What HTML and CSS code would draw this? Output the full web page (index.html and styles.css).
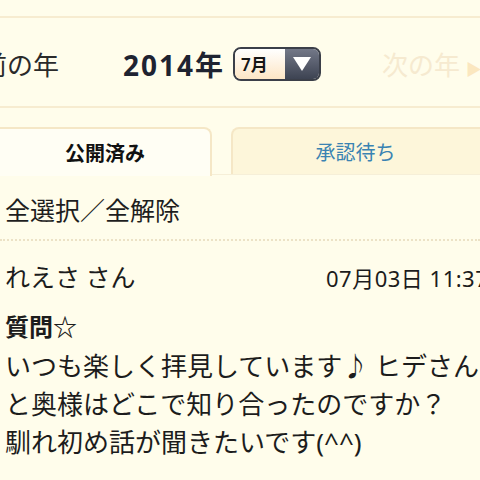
FILE: index.html
```html
<!DOCTYPE html>
<html lang="ja">
<head>
<meta charset="utf-8">
<link rel="stylesheet" href="styles.css">
</head>
<body>
<div class="page">
  <div class="topbar"></div>
  <div class="yearnav">
    <span class="prev">前の年</span>
    <span class="year">2014年</span>
    <span class="select"><span class="sel-val">7月</span><span class="sel-btn"><svg width="20" height="16" viewBox="0 0 20 16"><path d="M1 1 H19 L10 15 Z" fill="#fff"/></svg></span></span>
    <span class="next">次の年 <span class="arrow">▶</span></span>
  </div>
  <div class="tabs">
    <div class="tab active">公開済み</div>
    <div class="tab pending">承認待ち</div>
  </div>
  <div class="content">
    <div class="selectall">全選択／全解除</div>
    <div class="entry">
      <div class="meta"><span class="name">れえさ さん</span><span class="date">07月03日 11:37</span></div>
      <div class="title">質問☆</div>
      <div class="body">いつも楽しく拝見しています♪ ヒデさん<br>と奥様はどこで知り合ったのですか？<br>馴れ初め話が聞きたいです(^^)</div>
    </div>
  </div>
</div>
</body>
</html>
```

FILE: styles.css
```css
* { box-sizing: border-box; }
html, body { margin: 0; padding: 0; }
body {
  background: #fffdeb;
  font-family: "Noto Sans", "Noto Sans CJK JP", sans-serif;
  color: #1c1c1c;
}
.page { width: 480px; height: 480px; overflow: hidden; }
.topbar { height: 18px; border-bottom: 2px solid #f7ecd0; }
.yearnav {
  height: 90px;
  border-bottom: 2px solid #f7ecd0;
  display: flex;
  align-items: center;
  white-space: nowrap;
  padding-top: 3px;
}
.prev { margin-left: -19px; font-size: 26px; color: #2a2a2a; width: 142px; flex: none; font-family: "Noto Sans CJK JP", sans-serif; }
.year { font-size: 28px; font-weight: 700; color: #1e2331; width: 110px; flex: none; letter-spacing: 2px; }
.select {
  flex: none;
  display: flex;
  width: 88px;
  height: 34px;
  border: 2px solid #3b3f49;
  border-radius: 8px;
  overflow: hidden;
}
.sel-val {
  width: 50px;
  background: linear-gradient(#ffffff, #fde6c5);
  font-size: 17px;
  font-weight: 600;
  display: flex;
  align-items: center;
  padding-left: 6px;
  color: #151515;
}
.sel-btn {
  flex: 1;
  background: linear-gradient(#737888, #3d4352);
  display: flex;
  align-items: center;
  justify-content: center;
}
.next { margin-left: 61px; font-size: 26px; color: #f6ead0; flex: none; font-family: "Noto Sans CJK JP", sans-serif; }
.next .arrow { font-size: 16px; color: #fbe7bf; }
.tabs {
  margin-top: 19px;
  height: 48px;
  display: flex;
  gap: 19px;
  border-bottom: 1px solid #f6efd8;
}
.tab {
  display: flex;
  align-items: center;
  justify-content: center;
  font-size: 20px;
  border: 2px solid #f5e7c6;
  border-bottom: none;
}
.tab.active {
  width: 222px;
  margin-left: -10px;
  border-left: none;
  border-radius: 0 8px 0 0;
  background: #fffef4;
  font-weight: 700;
  color: #111;
  margin-bottom: -1px;
  height: 49px;
  padding-left: 10px;
}
.tab.pending {
  flex: 1;
  margin-right: -20px;
  border-radius: 8px 8px 0 0;
  background: #fdf6da;
  color: #3a83b2;
  padding-right: 20px;
}
.content { padding: 0 0 0 5px; }
.selectall { font-size: 25px; line-height: 36px; margin-top: 16px; color: #1e1e1e; font-family: "Noto Sans CJK JP", sans-serif; }
.entry { border-top: 2px dotted #ece2c6; margin-top: 12px; margin-left: -5px; padding-left: 5px; }
.meta { display: flex; align-items: baseline; margin-top: 17px; white-space: nowrap; }
.name { font-size: 25px; font-family: "Noto Sans CJK JP", sans-serif; width: 321px; flex: none; }
.date { font-size: 22px; letter-spacing: 0.5px; flex: none; }
.title { font-size: 24px; font-weight: 700; margin-top: 16px; line-height: 34px; }
.body { font-size: 26px; line-height: 38px; margin-top: 3px; white-space: nowrap; }
```
